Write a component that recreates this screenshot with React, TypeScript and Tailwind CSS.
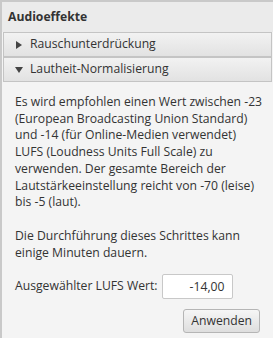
import { useState } from 'react';

function Header({ open, label }: { open: boolean; label: string }) {
    return (
        <div className="h-[25px] flex items-center border border-[#c4c4c4] bg-gradient-to-b from-[#f2f2f2] to-[#e2e2e2] text-[#333]">
            <span className="w-[26px] flex justify-center pl-[3px]">
                {open ? (
                    <svg width="8" height="6" viewBox="0 0 8 6"><path d="M0 0 L8 0 L4 6 Z" fill="#444" /></svg>
                ) : (
                    <svg width="6" height="8" viewBox="0 0 6 8"><path d="M0 0 L6 4 L0 8 Z" fill="#444" /></svg>
                )}
            </span>
            <span>{label}</span>
        </div>
    );
}

const infoLines = [
    'Es wird empfohlen einen Wert zwischen -23',
    '(European Broadcasting Union Standard)',
    'und -14 (für Online-Medien verwendet)',
    'LUFS (Loudness Units Full Scale) zu',
    'verwenden. Der gesamte Bereich der',
    'Lautstärkeeinstellung reicht von -70 (leise)',
    'bis -5 (laut).',
];

export default function App() {
    const [value, setValue] = useState('-14,00');

    return (
        <div
            className="relative w-[273px] h-[338px] bg-[#f4f4f4] border-t-2 border-l-2 border-[#c9c9c9] flex flex-col text-[12.2px] leading-[16.7px] text-[#333] overflow-hidden"
            style={{ fontFamily: '"Open Sans", sans-serif' }}
        >
            <div className="absolute left-[-2px] top-[35px] w-[2px] h-[45px] bg-[#0096d6]" />
            <div className="h-[30px] shrink-0 bg-[#ebebeb] flex items-center px-[6px] font-bold">
                Audioeffekte
            </div>
            <div className="mx-px flex flex-col">
                <Header open={false} label="Rauschunterdrückung" />
                <Header open={true} label="Lautheit-Normalisierung" />
            </div>
            <div className="flex flex-col pl-[13px] pr-[4px] pt-[12px] whitespace-nowrap">
                <p>
                    {infoLines.map(line => (
                        <span key={line} className="block">{line}</span>
                    ))}
                </p>
                <p className="mt-[17px]">
                    <span className="block">Die Durchführung dieses Schrittes kann</span>
                    <span className="block">einige Minuten dauern.</span>
                </p>
                <div className="flex items-center gap-[4px] mt-[13px]">
                    <span>Ausgewählter LUFS Wert:</span>
                    <input
                        value={value}
                        onChange={e => setValue(e.target.value)}
                        className="w-[71px] h-[25px] bg-white border border-[#c8c8c8] rounded-[2px] text-right px-[7px] text-[12.2px] text-[#333] outline-none"
                    />
                </div>
                <div className="flex justify-end mt-[10px] pr-[9px]">
                    <button className="h-[24px] px-[7px] border border-[#b5b5b5] rounded-[3px] bg-gradient-to-b from-[#f6f6f6] to-[#dedede] text-[#333]">
                        Anwenden
                    </button>
                </div>
            </div>
        </div>
    );
}
